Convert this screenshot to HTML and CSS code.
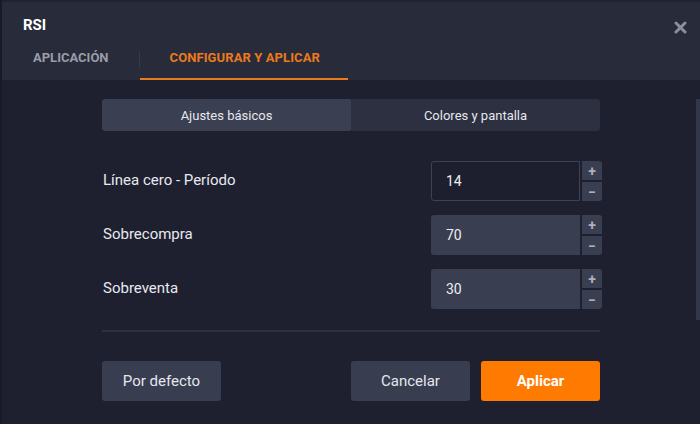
FILE: index.html
```html
<!DOCTYPE html>
<html lang="es">
<head>
    <meta charset="UTF-8">
    <title>RSI</title>
    <meta name="viewport" content="width=device-width, initial-scale=1.0">
    <link rel="stylesheet" href="styles.css">
</head>
<body>
    <div class="dialog">
        <div class="header">
            <div class="title-row">
                <span class="title">RSI</span>
                <svg class="close" width="13" height="13" viewBox="0 0 13 13">
                    <path d="M2 2 L11 11 M11 2 L2 11" stroke="#8c8f9b" stroke-width="3" stroke-linecap="round"/>
                </svg>
            </div>
            <div class="tabs">
                <div class="tab">APLICACIÓN</div>
                <div class="tab-sep"></div>
                <div class="tab active">CONFIGURAR Y APLICAR</div>
            </div>
        </div>
        <div class="content">
            <div class="scroll">
                <div class="segmented">
                    <div class="seg active">Ajustes básicos</div>
                    <div class="seg">Colores y pantalla</div>
                </div>
                <div class="rows">
                    <div class="row">
                        <span class="label">Línea cero - Período</span>
                        <div class="field">
                            <div class="input focus">14</div>
                            <div class="stepper">
                                <div class="step">+</div>
                                <div class="step">&minus;</div>
                            </div>
                        </div>
                    </div>
                    <div class="row">
                        <span class="label">Sobrecompra</span>
                        <div class="field">
                            <div class="input">70</div>
                            <div class="stepper">
                                <div class="step">+</div>
                                <div class="step">&minus;</div>
                            </div>
                        </div>
                    </div>
                    <div class="row">
                        <span class="label">Sobreventa</span>
                        <div class="field">
                            <div class="input">30</div>
                            <div class="stepper">
                                <div class="step">+</div>
                                <div class="step">&minus;</div>
                            </div>
                        </div>
                    </div>
                </div>
                <div class="divider"></div>
            </div>
            <div class="scrollbar"></div>
            <div class="buttons">
                <button class="btn">Por defecto</button>
                <div class="right-btns">
                    <button class="btn">Cancelar</button>
                    <button class="btn primary">Aplicar</button>
                </div>
            </div>
        </div>
    </div>
</body>
</html>
```

FILE: styles.css
```css
html, body {
    margin: 0;
    padding: 0;
}
body {
    background: #1e2030;
    font-family: Roboto, "Liberation Sans", sans-serif;
    color: #e6e7ec;
}
.dialog {
    width: 700px;
    height: 424px;
    overflow: hidden;
    border-left: 2px solid #181a26;
    box-sizing: border-box;
}
.header {
    background: #282b3a;
    border-top: 2px solid #1f2230;
    height: 80px;
    box-sizing: border-box;
}
.title-row {
    display: flex;
    justify-content: space-between;
    align-items: center;
    height: 44px;
    padding: 2px 13px 0 21px;
    box-sizing: border-box;
}
.title {
    font-weight: 700;
    font-size: 15px;
    color: #ffffff;
}
.close {
    margin-top: 4px;
}
.tabs {
    display: flex;
    align-items: center;
    height: 34px;
}
.tab {
    font-size: 13px;
    font-weight: 700;
    color: #9a9da8;
    padding: 0 30px 0 31px;
    height: 34px;
    line-height: 24px;
    box-sizing: border-box;
}
.tab-sep {
    width: 1px;
    height: 17px;
    background: #363a4a;
    margin-top: -8px;
}
.tab.active {
    color: #ec7a1c;
    border-bottom: 2px solid #ec7a1c;
    padding: 0 28px 0 30px;
    letter-spacing: 0.1px;
}
.content {
    position: relative;
    height: 344px;
}
.scroll {
    padding: 19px 100px 0 100px;
}
.segmented {
    display: flex;
    height: 32px;
    background: #2c3040;
    border-radius: 3px;
    overflow: hidden;
}
.seg {
    flex: 1;
    display: flex;
    align-items: center;
    justify-content: center;
    font-size: 13px;
    color: #e6e7ec;
}
.seg.active {
    background: #3a3f52;
    border-radius: 3px;
}
.rows {
    display: flex;
    flex-direction: column;
    gap: 14px;
    margin-top: 30px;
}
.row {
    display: flex;
    justify-content: space-between;
    align-items: center;
    height: 40px;
}
.label {
    font-size: 15px;
    padding-left: 1px;
    margin-top: -2px;
    color: #e8e9ee;
}
.field {
    display: flex;
    gap: 2px;
    height: 40px;
    margin-right: -2px;
}
.input {
    width: 149px;
    box-sizing: border-box;
    background: #393e51;
    border-radius: 3px 0 0 3px;
    font-size: 14px;
    line-height: 40px;
    padding-left: 15px;
    color: #eceef2;
}
.input.focus {
    background: #1d1f2e;
    border: 1px solid #3c4154;
    line-height: 38px;
    padding-left: 14px;
}
.stepper {
    display: flex;
    flex-direction: column;
    gap: 2px;
    width: 20px;
}
.step {
    flex: 1;
    background: #393e51;
    color: #aeb1bd;
    font-size: 14px;
    font-weight: 700;
    display: flex;
    align-items: center;
    justify-content: center;
}
.step:first-child {
    border-radius: 0 3px 0 0;
}
.step:last-child {
    border-radius: 0 0 3px 0;
}
.divider {
    height: 2px;
    background: #2d3142;
    margin-top: 21px;
}
.scrollbar {
    position: absolute;
    right: 0;
    top: 19px;
    width: 4px;
    height: 221px;
    background: #33374a;
}
.buttons {
    display: flex;
    justify-content: space-between;
    padding: 29px 100px 0 100px;
}
.right-btns {
    display: flex;
    gap: 11px;
}
.btn {
    width: 119px;
    height: 40px;
    border: none;
    border-radius: 3px;
    background: #383d50;
    color: #e6e7ec;
    font-family: Roboto, "Liberation Sans", sans-serif;
    font-size: 15px;
}
.btn.primary {
    background: #ff7a00;
    color: #ffffff;
    font-weight: 700;
}
```
